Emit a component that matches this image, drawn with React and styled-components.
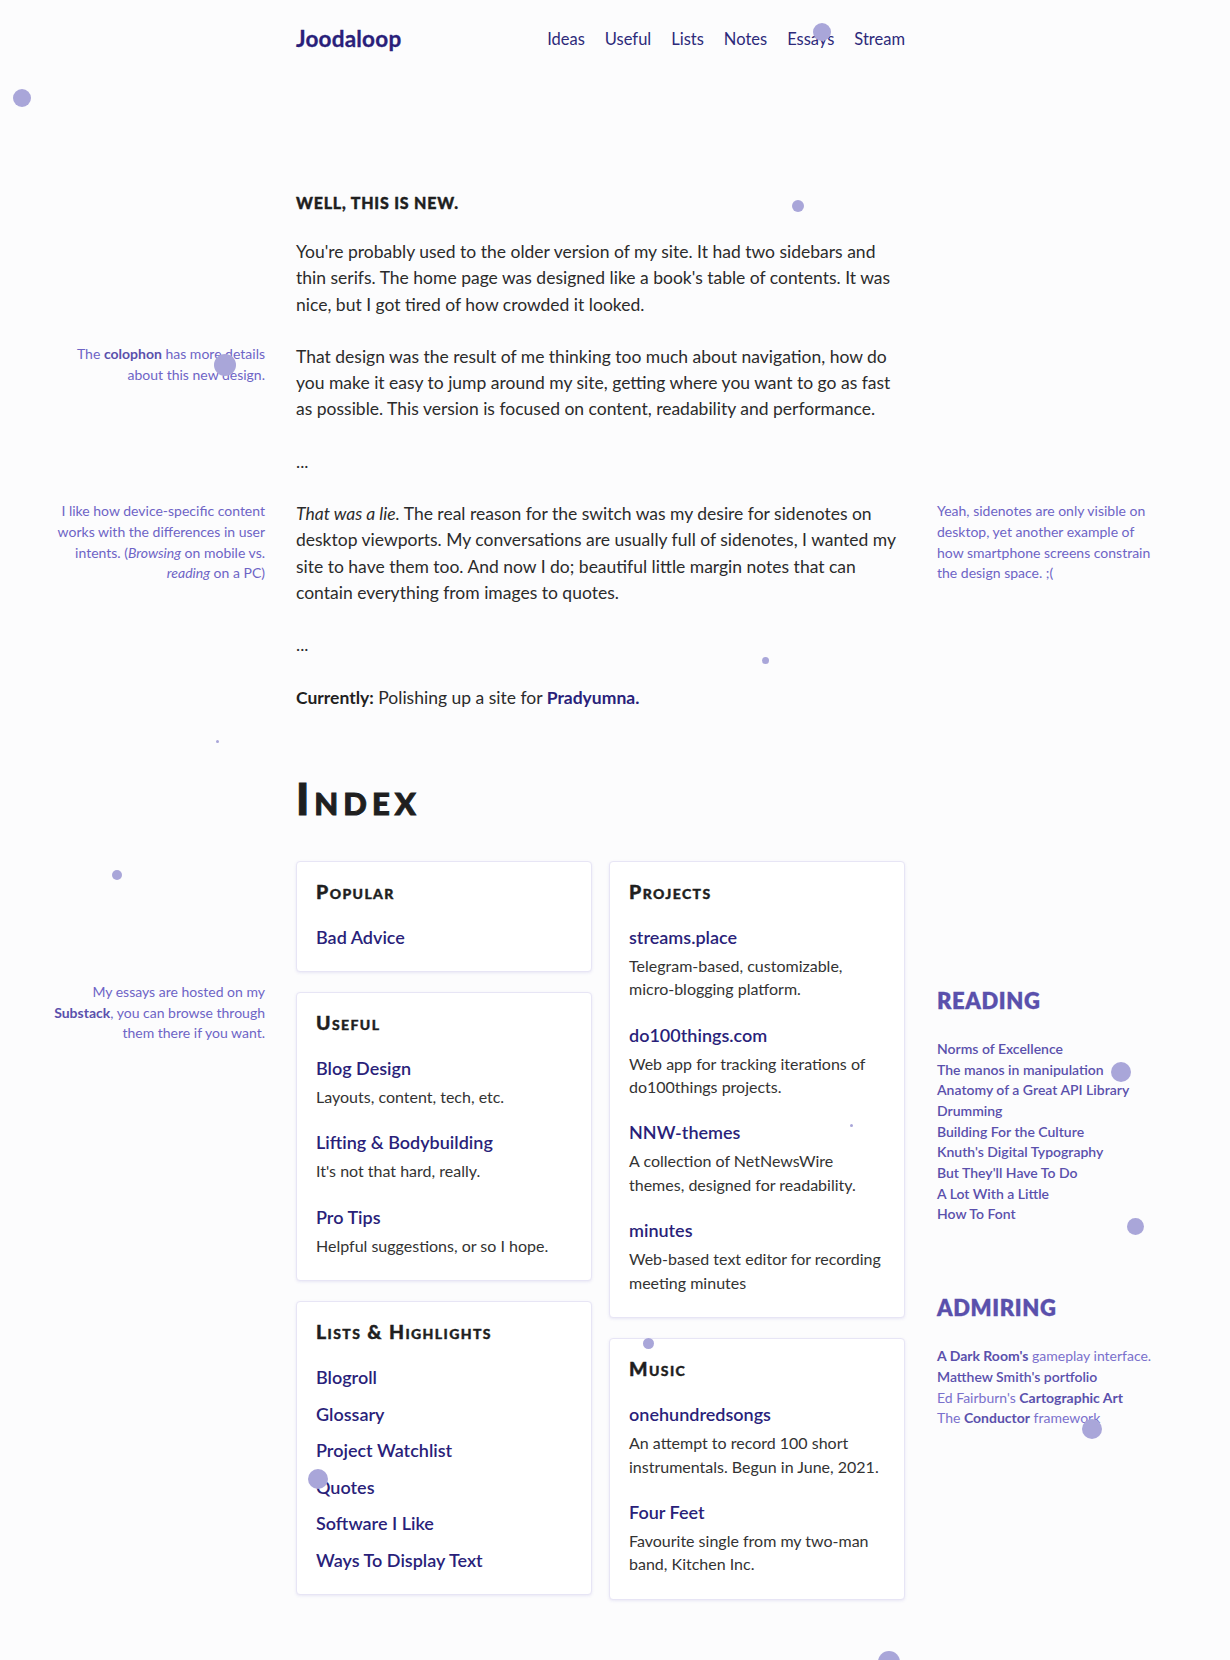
import React from "react";
import styled, { createGlobalStyle } from "styled-components";

const GlobalStyle = createGlobalStyle`
  html, body {
    margin: 0;
    padding: 0;
    background: #fcfcfd;
  }
  body {
    font-family: "Lato", "Noto Sans", sans-serif;
    color: #2b2b2b;
    -webkit-font-smoothing: antialiased;
  }
  * { box-sizing: border-box; }
`;

const Page = styled.div`
  position: relative;
  min-height: 1660px;
  overflow: hidden;
  padding-bottom: 80px;
`;

const Row = styled.div`
  display: grid;
  grid-template-columns: 296px 609px 1fr;
  margin-bottom: ${({ $gap }) => $gap ?? 0}px;
`;

const Header = styled.header`
  grid-column: 2;
  display: flex;
  align-items: center;
  justify-content: space-between;
  padding-top: 23px;
  height: 54px;
`;

const Logo = styled.a`
  font-size: 22.5px;
  font-weight: 700;
  color: #2a1f7a;
  text-decoration: none;
  letter-spacing: 0.2px;
  -webkit-text-stroke: 0.3px currentColor;
`;

const Nav = styled.nav`
  display: flex;
  gap: 20px;
`;

const NavLink = styled.a`
  font-size: 16.5px;
  color: #2d2a7a;
  text-decoration: none;
`;

const Main = styled.div`
  grid-column: 2;
`;

const Kicker = styled.h3`
  margin: 0;
  font-size: 16px;
  font-weight: 900;
  letter-spacing: 0.8px;
  text-transform: uppercase;
  color: #1f1f1f;
  line-height: 24px;
  -webkit-text-stroke: 0.4px currentColor;
`;

const Para = styled.p`
  margin: 0;
  font-size: 17.5px;
  line-height: 26.3px;
  color: #2b2b2b;
`;

const Strong = styled.strong`
  font-weight: 700;
  color: #1f1f1f;
`;

const BodyLink = styled.a`
  font-weight: 700;
  color: #2a1f7a;
  text-decoration: none;
`;

const LeftAside = styled.aside`
  grid-column: 1;
  padding-right: 31px;
  padding-top: ${({ $top }) => $top ?? 0}px;
  display: flex;
  justify-content: flex-end;
`;

const RightAside = styled.aside`
  grid-column: 3;
  padding-left: 32px;
  padding-top: ${({ $top }) => $top ?? 0}px;
`;

const Sidenote = styled.p`
  margin: 0;
  width: 220px;
  font-size: 14px;
  line-height: 20.8px;
  color: #6e64c6;
  text-align: ${({ $align }) => $align || "left"};

  b {
    font-weight: 700;
    color: #5a50ac;
  }
`;

const IndexTitle = styled.h1`
  margin: 0;
  font-size: 44px;
  line-height: 53px;
  font-weight: 900;
  font-variant: small-caps;
  letter-spacing: 5px;
  color: #1f1f1f;
  -webkit-text-stroke: 1px currentColor;
`;

const Columns = styled.div`
  grid-column: 2;
  display: grid;
  grid-template-columns: 1fr 1fr;
  gap: 17px;
  align-items: start;
`;

const Stack = styled.div`
  display: flex;
  flex-direction: column;
  gap: 20px;
`;

const Card = styled.section`
  background: #ffffff;
  border: 1px solid #e7e5f5;
  border-radius: 4px;
  box-shadow: 0 1px 3px rgba(90, 80, 190, 0.12);
  padding: 18px 19px 20px;
`;

const CardTitle = styled.h2`
  margin: 0 0 20px;
  font-size: 19.5px;
  line-height: 24px;
  font-weight: 900;
  font-variant: small-caps;
  letter-spacing: 1.4px;
  color: #1f1f1f;
  -webkit-text-stroke: 0.4px currentColor;
`;

const EntryList = styled.div`
  display: flex;
  flex-direction: column;
  gap: ${({ $gap }) => $gap}px;
`;

const CardLink = styled.a`
  display: block;
  font-size: 18px;
  line-height: 27px;
  font-weight: 600;
  color: #2a1f7a;
  text-decoration: none;
`;

const CardDesc = styled.p`
  margin: 3px 0 3px;
  font-size: 16px;
  line-height: 23.4px;
  color: #333333;
`;

const AsideHeading = styled.h4`
  margin: 0 0 23px;
  font-size: 22px;
  line-height: 30px;
  font-weight: 800;
  letter-spacing: 0.6px;
  color: #5a50ac;
  -webkit-text-stroke: 0.3px currentColor;
`;

const AsideList = styled.ul`
  list-style: none;
  margin: 0 0 68px;
  padding: 0;
`;

const AsideItem = styled.li`
  font-size: 14px;
  line-height: 20.7px;
  font-weight: ${({ $plain }) => ($plain ? 400 : 600)};
  color: ${({ $plain }) => ($plain ? "#7a70cc" : "#5a50ac")};

  b {
    font-weight: 700;
    color: #5a50ac;
  }
`;

const Dot = styled.span`
  position: absolute;
  border-radius: 50%;
  background: #a9a6d9;
  pointer-events: none;
`;

const dots = [
  [822, 32, 18],
  [22, 98, 18],
  [798, 206, 12],
  [225, 365, 22],
  [765, 660, 7],
  [217, 741, 3],
  [117, 875, 10],
  [851, 1125, 3],
  [1121, 1072, 20],
  [1135, 1226, 17],
  [648, 1343, 11],
  [318, 1479, 20],
  [1092, 1429, 20],
  [889, 1662, 22],
];

const navItems = ["Ideas", "Useful", "Lists", "Notes", "Essays", "Stream"];

const useful = [
  ["Blog Design", "Layouts, content, tech, etc."],
  ["Lifting & Bodybuilding", "It's not that hard, really."],
  ["Pro Tips", "Helpful suggestions, or so I hope."],
];

const lists = [
  ["Blogroll"],
  ["Glossary"],
  ["Project Watchlist"],
  ["Quotes"],
  ["Software I Like"],
  ["Ways To Display Text"],
];

const projects = [
  ["streams.place", "Telegram-based, customizable, micro-blogging platform."],
  ["do100things.com", "Web app for tracking iterations of do100things projects."],
  ["NNW-themes", "A collection of NetNewsWire themes, designed for readability."],
  ["minutes", "Web-based text editor for recording meeting minutes"],
];

const music = [
  ["onehundredsongs", "An attempt to record 100 short instrumentals. Begun in June, 2021."],
  ["Four Feet", "Favourite single from my two-man band, Kitchen Inc."],
];

const reading = [
  "Norms of Excellence",
  "The manos in manipulation",
  "Anatomy of a Great API Library",
  "Drumming",
  "Building For the Culture",
  "Knuth's Digital Typography",
  "But They'll Have To Do",
  "A Lot With a Little",
  "How To Font",
];

function LinkCard({ title, items, gap = 18 }) {
  return (
    <Card>
      <CardTitle>{title}</CardTitle>
      <EntryList $gap={gap}>
        {items.map(([name, desc]) => (
          <div key={name}>
            <CardLink href="#">{name}</CardLink>
            {desc && <CardDesc>{desc}</CardDesc>}
          </div>
        ))}
      </EntryList>
    </Card>
  );
}

export default function App() {
  return (
    <Page>
      <GlobalStyle />

      <Row $gap={137}>
        <Header>
          <Logo href="#">Joodaloop</Logo>
          <Nav>
            {navItems.map((item) => (
              <NavLink key={item} href="#">{item}</NavLink>
            ))}
          </Nav>
        </Header>
      </Row>

      <Row $gap={24}>
        <Main>
          <Kicker>Well, this is new.</Kicker>
        </Main>
      </Row>

      <Row $gap={26}>
        <Main>
          <Para>
            You're probably used to the older version of my site. It had two sidebars and
            thin serifs. The home page was designed like a book's table of contents. It was
            nice, but I got tired of how crowded it looked.
          </Para>
        </Main>
      </Row>

      <Row $gap={26}>
        <LeftAside>
          <Sidenote $align="right">
            The <b>colophon</b> has more details about this new design.
          </Sidenote>
        </LeftAside>
        <Main>
          <Para>
            That design was the result of me thinking too much about navigation, how do
            you make it easy to jump around my site, getting where you want to go as fast
            as possible. This version is focused on content, readability and performance.
          </Para>
        </Main>
      </Row>

      <Row $gap={26}>
        <Main>
          <Para>...</Para>
        </Main>
      </Row>

      <Row $gap={26}>
        <LeftAside>
          <Sidenote $align="right">
            I like how device-specific content works with the differences in user
            intents. (<i>Browsing</i> on mobile vs. <i>reading</i> on a PC)
          </Sidenote>
        </LeftAside>
        <Main>
          <Para>
            <i>That was a lie.</i> The real reason for the switch was my desire for sidenotes on
            desktop viewports. My conversations are usually full of sidenotes, I wanted my
            site to have them too. And now I do; beautiful little margin notes that can
            contain everything from images to quotes.
          </Para>
        </Main>
        <RightAside>
          <Sidenote>
            Yeah, sidenotes are only visible on desktop, yet another example of how
            smartphone screens constrain the design space. ;(
          </Sidenote>
        </RightAside>
      </Row>

      <Row $gap={26}>
        <Main>
          <Para>...</Para>
        </Main>
      </Row>

      <Row $gap={61}>
        <Main>
          <Para>
            <Strong>Currently:</Strong> Polishing up a site for{" "}
            <BodyLink href="#">Pradyumna.</BodyLink>
          </Para>
        </Main>
      </Row>

      <Row $gap={36}>
        <Main>
          <IndexTitle>Index</IndexTitle>
        </Main>
      </Row>

      <Row>
        <LeftAside $top={121}>
          <Sidenote $align="right">
            My essays are hosted on my <b>Substack</b>, you can browse through them there
            if you want.
          </Sidenote>
        </LeftAside>

        <Columns>
          <Stack>
            <LinkCard title="Popular" items={[["Bad Advice"]]} />
            <LinkCard title="Useful" items={useful} />
            <LinkCard title="Lists & Highlights" items={lists} gap={9.5} />
          </Stack>
          <Stack>
            <LinkCard title="Projects" items={projects} />
            <LinkCard title="Music" items={music} />
          </Stack>
        </Columns>

        <RightAside $top={125}>
          <AsideHeading>READING</AsideHeading>
          <AsideList>
            {reading.map((r) => (
              <AsideItem key={r}>{r}</AsideItem>
            ))}
          </AsideList>
          <AsideHeading>ADMIRING</AsideHeading>
          <AsideList>
            <AsideItem $plain>
              <b>A Dark Room's</b> gameplay interface.
            </AsideItem>
            <AsideItem>Matthew Smith's portfolio</AsideItem>
            <AsideItem $plain>
              Ed Fairburn's <b>Cartographic Art</b>
            </AsideItem>
            <AsideItem $plain>
              The <b>Conductor</b> framework
            </AsideItem>
          </AsideList>
        </RightAside>
      </Row>

      {dots.map(([x, y, d], i) => (
        <Dot
          key={i}
          style={{ left: x - d / 2, top: y - d / 2, width: d, height: d }}
        />
      ))}
    </Page>
  );
}
